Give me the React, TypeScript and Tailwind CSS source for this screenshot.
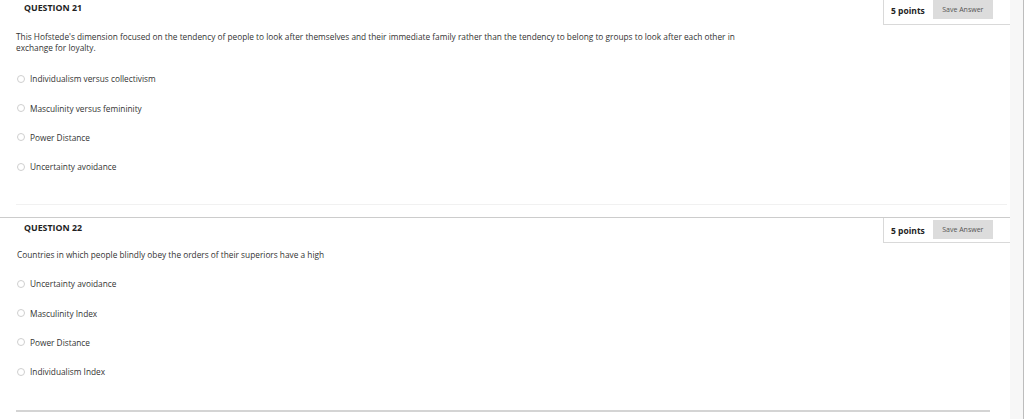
import React from 'react';

interface Question {
  number: number;
  points: number;
  text: string;
  options: string[];
}

const QUESTIONS: Question[] = [
  {
    number: 21,
    points: 5,
    text: "This Hofstede's dimension focused on the tendency of people to look after themselves and their immediate family rather than the tendency to belong to groups to look after each other in exchange for loyalty.",
    options: [
      'Individualism versus collectivism',
      'Masculinity versus femininity',
      'Power Distance',
      'Uncertainty avoidance',
    ],
  },
  {
    number: 22,
    points: 5,
    text: 'Countries in which people blindly obey the orders of their superiors have a high',
    options: ['Uncertainty avoidance', 'Masculinity Index', 'Power Distance', 'Individualism Index'],
  },
];

function PointsBox({ points, offset }: { points: number; offset?: boolean }) {
  return (
    <div className="w-[127px] h-[25px] border-l border-b border-[#d9d9d9] flex items-start shrink-0">
      <span
        className={
          offset
            ? 'pl-[7px] pt-[7px] text-[8.5px] font-bold text-[#222] leading-[11px]'
            : 'pl-[7px] pt-[5px] text-[8.5px] font-bold text-[#222] leading-[11px]'
        }
      >
        {points} points
      </span>
      <button
        className={
          offset
            ? 'ml-[8px] mt-[2px] w-[60px] h-[19px] bg-[#dcdcdc] text-[7px] text-[#555] leading-[19px] text-center'
            : 'ml-[8px] w-[60px] h-[19px] bg-[#dcdcdc] text-[7px] text-[#555] leading-[19px] text-center'
        }
      >
        Save Answer
      </button>
    </div>
  );
}

function Option({ label }: { label: string }) {
  return (
    <div className="h-[29.4px] flex items-center pl-[17px]">
      <span className="w-[8px] h-[8px] rounded-full border border-[#cfcfcf] bg-white shrink-0" />
      <span className="ml-[5px] text-[8.3px] text-[#333] leading-[11px]">{label}</span>
    </div>
  );
}

export default function App() {
  const [q21, q22] = QUESTIONS;
  return (
    <div
      className="w-[1024px] h-[419px] bg-white flex overflow-hidden"
      style={{ fontFamily: '"Open Sans", "Liberation Sans", sans-serif' }}
    >
      <div className="w-[1010px] shrink-0">
        {/* question 21 */}
        <div className="h-[217px]">
          <div className="flex justify-between">
            <h3 className="pl-[24px] pt-[3px] text-[8.8px] font-bold text-[#222] leading-[11px]">
              QUESTION {q21.number}
            </h3>
            <PointsBox points={q21.points} />
          </div>
          <p className="pl-[16px] mt-[7px] w-[760px] text-[8.3px] text-[#333] leading-[10.5px]">
            {q21.text}
          </p>
          <div className="mt-[11px]">
            {q21.options.map((o) => (
              <Option key={o} label={o} />
            ))}
          </div>
          <div className="ml-[16px] mt-[22px] mr-[3px] border-t border-[#f1f1f1]" />
        </div>

        {/* question 22 */}
        <div className="border-t border-[#cccccc]">
          <div className="flex justify-between">
            <h3 className="pl-[24px] pt-[5px] text-[8.8px] font-bold text-[#222] leading-[11px]">
              QUESTION {q22.number}
            </h3>
            <PointsBox points={q22.points} offset />
          </div>
          <p className="pl-[17px] mt-[6px] text-[8.3px] text-[#333] leading-[11px]">{q22.text}</p>
          <div className="mt-[9px]">
            {q22.options.map((o) => (
              <Option key={o} label={o} />
            ))}
          </div>
          <div className="ml-[16px] w-[974px] mt-[23px] border-t-2 border-[#d4d4d4]" />
        </div>
      </div>
      <div className="flex-1 bg-[#f7f7f7] border-r border-[#bdbdbd]" />
    </div>
  );
}
